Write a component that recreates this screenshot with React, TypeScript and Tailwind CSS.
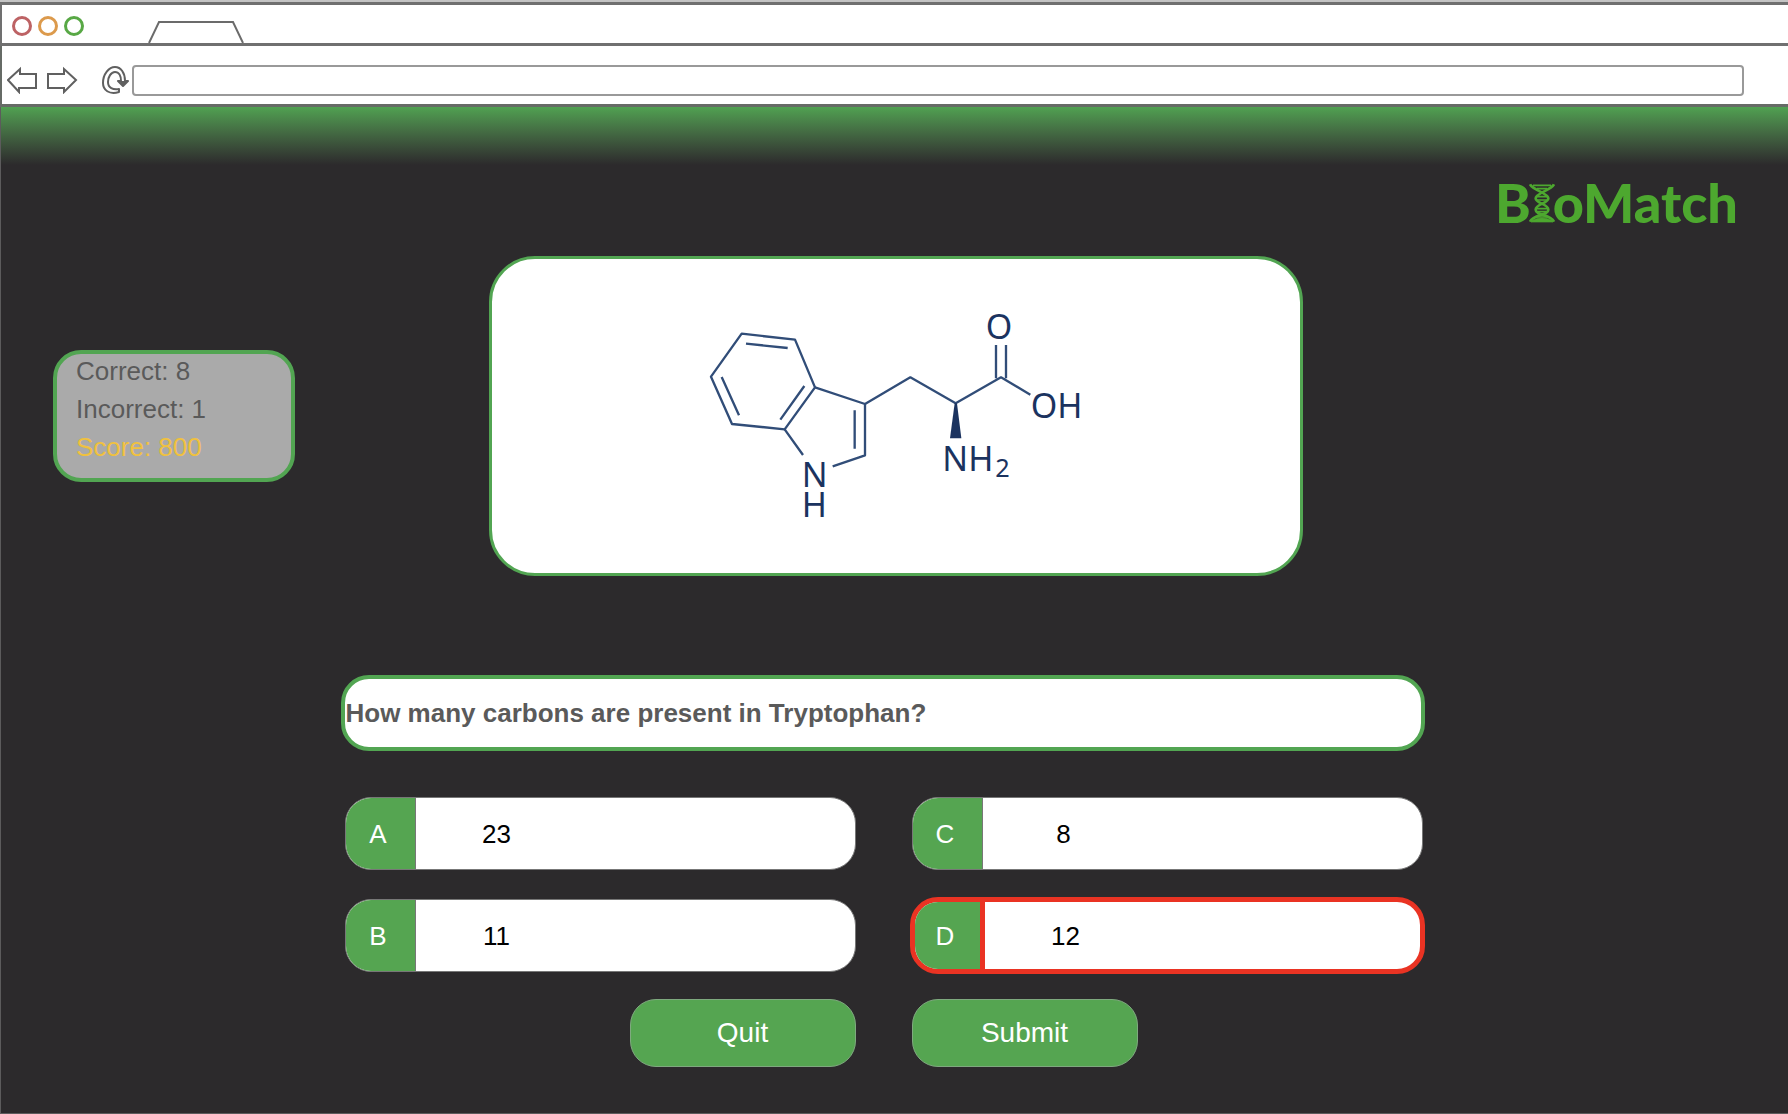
import { useState } from "react";

const answers = [
  { id: "A", text: "23" },
  { id: "C", text: "8" },
  { id: "B", text: "11" },
  { id: "D", text: "12" },
];

function BrowserChrome() {
  return (
    <header className="border-t-2 border-[#c4c4c4] bg-white">
      <div className="flex h-11 items-end border-t-[3px] border-b-[3px] border-l-2 border-[#707070]">
        <div className="flex gap-1.5 self-center pt-1 pl-2.5">
          <span className="size-5 rounded-full border-[3px] border-[#bd6264]" />
          <span className="size-5 rounded-full border-[3px] border-[#dc9a4c]" />
          <span className="size-5 rounded-full border-[3px] border-[#58a845]" />
        </div>
        <svg className="ml-16" width="98" height="23" viewBox="0 0 98 23" fill="none" aria-hidden="true">
          <path d="M1 23 L11 2 H85 L95 23" stroke="#6b6b6b" strokeWidth="2" />
        </svg>
      </div>
      <nav className="flex h-[61px] items-center border-b-[3px] border-l-2 border-[#666b66] pt-2.5 pr-[44px] pl-[5px]">
        <button type="button" aria-label="Back">
          <svg width="31" height="28" viewBox="0 0 31 28" fill="none">
            <path d="M1 14 L13 3 V8 H29 V22 H12 V26 Z" stroke="#606060" strokeWidth="2" />
          </svg>
        </button>
        <button type="button" aria-label="Forward" className="ml-[9px]">
          <svg width="31" height="28" viewBox="0 0 31 28" fill="none">
            <path d="M29 14 L17 3 V8 H1 V22 H17 V26 Z" stroke="#606060" strokeWidth="2" />
          </svg>
        </button>
        <button type="button" aria-label="Reload" className="ml-[23px]">
          <svg width="29" height="30" viewBox="0 0 29 30" fill="none">
            <path
              d="M18 24 V27 C8 30 2 25 2 18 C2 9 8 2 14 2 C20 2 24 8 24 16 H27 L22 21 L17 16 H20 C20 11 18 7 14 7 C10 7 7 12 7 17 C7 23 12 25 18 24 Z"
              stroke="#606060"
              strokeWidth="2"
              strokeLinejoin="round"
            />
            <path d="M18 16 H27 L22 21 Z" fill="#606060" />
          </svg>
        </button>
        <input
          type="text"
          aria-label="Address"
          className="ml-0.5 h-[31px] min-w-0 flex-1 rounded-[4px] border-2 border-[#999] bg-white px-2 text-base outline-none"
        />
      </nav>
    </header>
  );
}

function Logo() {
  return (
    <h1
      aria-label="BioMatch"
      className="flex items-baseline font-['Lato',sans-serif] text-[54px] leading-[60px] font-black text-[#4da82f]"
    >
      <span>B</span>
      <svg className="-mx-0.5" width="26" height="40" viewBox="0 0 78 120" fill="none" stroke="#4da82f" aria-hidden="true">
        <path d="M3 4 C12 22 58 30 58 46 C58 62 20 62 20 80 C20 98 66 94 75 116" strokeWidth="8" />
        <path d="M75 4 C66 22 20 30 20 46 C20 62 58 62 58 80 C58 98 12 94 3 116" strokeWidth="8" />
        <path d="M12 7 H66 M24 17 H54 M24 41 H54 M24 51 H54 M24 77 H54 M26 86 H52 M22 102 H56 M8 114 H70" strokeWidth="5" />
        <path d="M6 117 C20 101 58 101 72 117 Z" fill="#4da82f" strokeWidth="2" />
      </svg>
      <span>oMatch</span>
    </h1>
  );
}

function Tryptophan() {
  return (
    <svg
      width="412"
      height="240"
      viewBox="0 0 1236 720"
      fill="none"
      stroke="#314d78"
      strokeWidth="7"
      strokeLinejoin="round"
      role="img"
      aria-label="Structure of tryptophan"
    >
      <path d="M155 128 L315 146 L375 289 L284 415 L126 399 L63 257 Z" />
      <path d="M168 158 L293 171 M95 258 L147 373 M343 285 L271 386" />
      <path d="M375 289 L525 339 V493 L428 526 M494 358 V473 M284 415 L339 492" />
      <path d="M525 339 L661 259 L797 337 L933 259 L1021 311 M918 162 V262 M948 162 V262" />
      <path d="M794 337 H801 L814 442 H780 Z" fill="#1b335f" stroke="none" />
      <g fill="#1b335f" stroke="none" fontSize="102" fontFamily="'Noto Sans', sans-serif">
        <text>
          <tspan x="335" y="587">N</tspan>
          <tspan x="335" y="678">H</tspan>
        </text>
        <text x="887" y="144">O</text>
        <text x="1022" y="380">OH</text>
        <text x="757" y="539">NH</text>
        <text x="916" y="558" fontSize="76">2</text>
      </g>
    </svg>
  );
}

export default function App() {
  const [selected, setSelected] = useState("D");

  return (
    <div className="flex min-h-screen flex-col bg-[#2c2a2c] font-['Liberation_Sans',Arial,sans-serif]">
      <BrowserChrome />
      <main className="flex-1 border-b border-l border-[#5c5b5c]">
        <div className="h-[58px] bg-linear-to-b from-[#50a151] to-[#2c2a2c]" />
        <div className="flex justify-end pt-2 pr-[50px]">
          <Logo />
        </div>

        <section className="mt-[23px] grid grid-cols-[242px_1fr_242px] items-start pr-[50px] pl-[52px]">
          <div className="mt-[94px] h-[132px] rounded-[28px] border-4 border-[#52a552] bg-[#aaa] pl-[19px] text-[26px] leading-[38px] text-[#5a5a5a]">
            <div className="-mt-0.5">
              <p>Correct: 8</p>
              <p>Incorrect: 1</p>
              <p className="text-[#f0c13f]">Score: 800</p>
            </div>
          </div>
          <div className="mx-auto flex w-full max-w-[814px] justify-center rounded-[46px] border-[3px] border-[#52a552] bg-white pt-8 pb-[42px]">
            <Tryptophan />
          </div>
        </section>

        <form className="mt-[99px] pr-6" onSubmit={(e) => e.preventDefault()}>
          <fieldset className="mx-auto w-full max-w-[1084px]">
            <legend className="flex h-[76px] w-full items-center rounded-[28px] border-4 border-[#52a552] bg-white pl-px text-[26px] leading-8 font-bold text-[#5a5a5a]">
              How many carbons are present in Tryptophan?
            </legend>
            <div className="mt-[46px] grid grid-cols-2 gap-x-14 gap-y-[29px] pr-0.5 pl-1">
              {answers.map(({ id, text }) => {
                const on = id === selected;
                return (
                  <label
                    key={id}
                    className={`flex cursor-pointer overflow-hidden bg-white text-[26px] leading-8 ${
                      on
                        ? "-m-0.5 h-[77px] rounded-[28px] border-5 border-[#ea3323]"
                        : "h-[73px] rounded-[26px] border border-[#777]"
                    }`}
                  >
                    <input
                      type="radio"
                      name="answer"
                      value={id}
                      checked={on}
                      onChange={() => setSelected(id)}
                      className="sr-only"
                    />
                    <span
                      className={`flex w-[70px] items-center justify-center bg-[#55a551] pr-1 text-white ${
                        on ? "border-r-5 border-[#ea3323]" : "border-r border-[#777]"
                      }`}
                    >
                      {id}
                    </span>
                    <span className="flex w-[162px] items-center justify-center text-black">{text}</span>
                  </label>
                );
              })}
            </div>
            <div className="mt-[27px] flex justify-center gap-14 pl-0.5">
              <button
                type="button"
                className="h-[68px] w-[226px] rounded-[26px] border border-[#7fa97f] bg-[#55a551] text-[28px] leading-8 text-white"
              >
                Quit
              </button>
              <button
                type="submit"
                className="h-[68px] w-[226px] rounded-[26px] border border-[#7fa97f] bg-[#55a551] text-[28px] leading-8 text-white"
              >
                Submit
              </button>
            </div>
          </fieldset>
        </form>
      </main>
    </div>
  );
}
